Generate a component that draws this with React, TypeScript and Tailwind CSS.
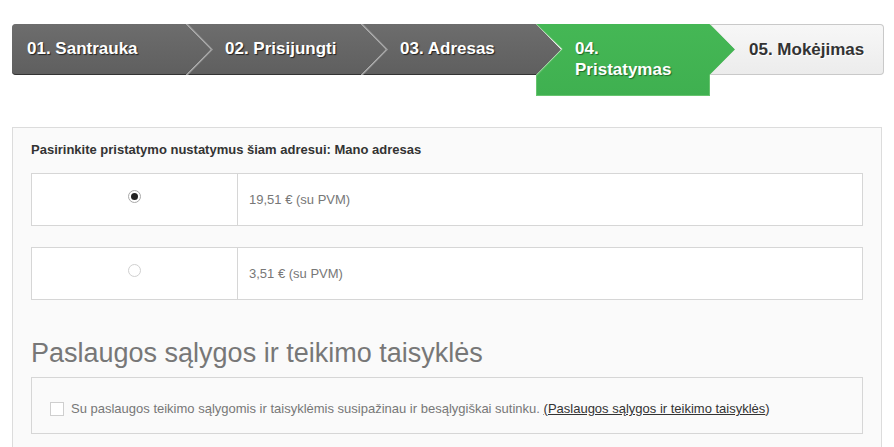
import React from "react";

const font = { fontFamily: '"Liberation Sans", Arial, sans-serif' };

function DarkStep({ label, first, width }: { label: string; first?: boolean; width: number }) {
  const outerClip = first
    ? "polygon(0 0, calc(100% - 25px) 0, 100% 50%, calc(100% - 25px) 100%, 0 100%)"
    : "polygon(0 0, calc(100% - 25px) 0, 100% 50%, calc(100% - 25px) 100%, 0 100%, 25px 50%)";
  const innerClip = first
    ? "polygon(0 0, calc(100% - 25px) 0, 100% 50%, calc(100% - 25px) 100%, 0 100%)"
    : "polygon(2px 0, calc(100% - 25px) 0, 100% 50%, calc(100% - 25px) 100%, 2px 100%, 27px 50%)";
  return (
    <div
      className={`h-[51px] shrink-0 bg-[#9c9c9c] ${first ? "rounded-l-[4px]" : "-ml-[25px]"}`}
      style={{ width, clipPath: outerClip }}
    >
      <div
        className={`h-full w-full bg-gradient-to-b from-[#6d6d6d] to-[#5f5f5f] border-b border-[#333] flex items-center ${first ? "pl-[15px] rounded-l-[4px]" : "pl-[39px]"}`}
        style={{ clipPath: innerClip }}
      >
        <span className="text-[17px] font-bold text-white [text-shadow:1px_1px_1px_#222]">{label}</span>
      </div>
    </div>
  );
}

export default function App() {
  return (
    <div className="min-h-[447px] w-[894px] bg-white pt-[24px] px-[12px]" style={font}>
      <div className="flex items-start">
        <DarkStep label="01. Santrauka" first width={199} />
        <DarkStep label="02. Prisijungti" width={200} />
        <DarkStep label="03. Adresas" width={200} />
        <div
          className="-ml-[25px] h-[72px] w-[200px] shrink-0 bg-[#67c46f]"
          style={{
            clipPath:
              "polygon(0 0, calc(100% - 26px) 0, 100% 25px, calc(100% - 26px) 51px, calc(100% - 26px) 100%, 0 100%, 0 51px, 26px 25px, 0 0)",
          }}
        >
          <div
            className="h-full w-full bg-gradient-to-b from-[#45b755] to-[#3fb050] pl-[39px] pt-[14px]"
            style={{
              clipPath:
                "polygon(1px 0, calc(100% - 27px) 0, calc(100% - 1px) 25px, calc(100% - 27px) 51px, calc(100% - 27px) calc(100% - 1px), 1px calc(100% - 1px), 1px 52px, 27px 25px, 1px 0)",
            }}
          >
            <div className="text-[17px] font-bold leading-[21px] text-white [text-shadow:1px_1px_1px_#1d6b2a]">
              04.
              <br />
              Pristatymas
            </div>
          </div>
        </div>
        <div
          className="-ml-[26px] h-[51px] w-[174px] shrink-0 rounded-r-[4px] bg-[#c9c9c9]"
          style={{ clipPath: "polygon(0 0, 100% 0, 100% 100%, 0 100%, 25px 50%)" }}
        >
          <div
            className="mt-[1px] h-[49px] w-[173px] rounded-r-[3px] bg-gradient-to-b from-[#f7f7f7] to-[#ececec] flex items-center pl-[39px]"
            style={{ clipPath: "polygon(0 -1px, 100% -1px, 100% 100%, 0 100%, 25px 50%)" }}
          >
            <span className="text-[17px] font-bold text-[#333] [text-shadow:1px_1px_0_#fff]">05. Mokėjimas</span>
          </div>
        </div>
      </div>

      <div className="mt-[31px] border border-[#dcdcdc] bg-[#fafafa] px-[18px] pt-[14px] pb-[14px] min-h-[330px]">
        <div className="text-[13px] font-bold text-[#333] leading-[16px]">
          Pasirinkite pristatymo nustatymus šiam adresui: Mano adresas
        </div>

        <div className="mt-[15px] flex flex-col gap-[21px]">
          {[
            { price: "19,51 € (su PVM)", checked: true },
            { price: "3,51 € (su PVM)", checked: false },
          ].map((r) => (
            <div key={r.price} className="flex h-[53px] border border-[#d6d6d6] bg-white">
              <div className="flex w-[206px] shrink-0 justify-center border-r border-[#d6d6d6] pt-[16px]">
                <span
                  className={`flex h-[13px] w-[13px] items-center justify-center rounded-full border bg-white ${r.checked ? "border-[#a9a9a9]" : "border-[#d0d0d0]"}`}
                >
                  {r.checked && <span className="h-[7px] w-[7px] rounded-full bg-[#222]" />}
                </span>
              </div>
              <div className="flex items-center pl-[11px] text-[13px] text-[#777]">{r.price}</div>
            </div>
          ))}
        </div>

        <h2 className="mt-[38px] text-[27px] leading-[30px] font-normal text-[#777]">
          Paslaugos sąlygos ir teikimo taisyklės
        </h2>

        <div className="mt-[9px] flex h-[57px] items-start border border-[#d6d6d6] bg-[#fafafa] pl-[18px] pt-[24px]">
          <span className="mr-[7px] h-[14px] w-[14px] shrink-0 border border-[#cfcfcf] bg-white" />
          <span className="text-[13px] leading-[14px] text-[#777]">
            Su paslaugos teikimo sąlygomis ir taisyklėmis susipažinau ir besąlygiškai sutinku.{" "}
            <span className="text-[#333]">
              <span className="underline">(Paslaugos sąlygos ir teikimo taisyklės</span>)
            </span>
          </span>
        </div>
      </div>
    </div>
  );
}
